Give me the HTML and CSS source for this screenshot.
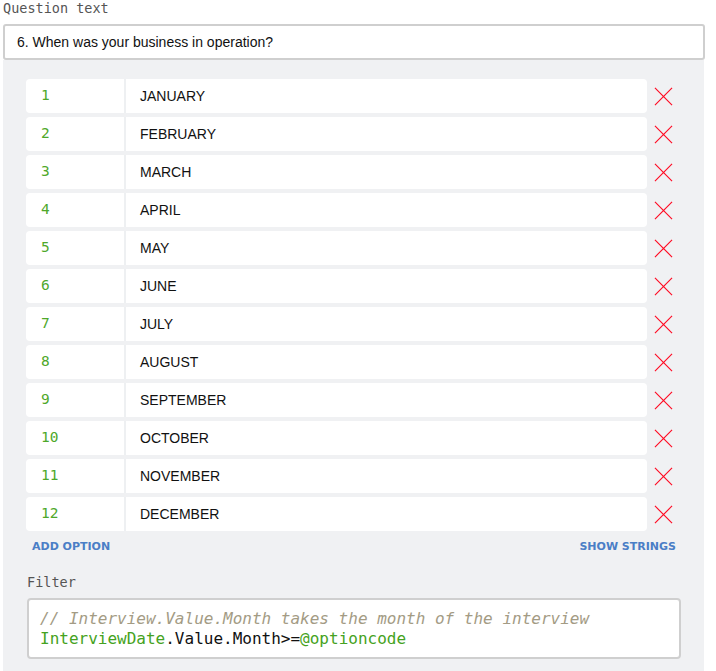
FILE: index.html
```html
<!DOCTYPE html>
<html>
<head>
<meta charset="utf-8">
<link rel="stylesheet" href="styles.css">
</head>
<body>
<div class="wrap">
  <div class="label">Question text</div>
  <div class="question">6. When was your business in operation?</div>
  <div class="panel">
    <div class="rows">
      <div class="row"><div class="opt"><div class="num">1</div><div class="txt">JANUARY</div></div><svg class="del" viewBox="0 0 20 20"><path d="M1 1L19 19M19 1L1 19"/></svg></div>
      <div class="row"><div class="opt"><div class="num">2</div><div class="txt">FEBRUARY</div></div><svg class="del" viewBox="0 0 20 20"><path d="M1 1L19 19M19 1L1 19"/></svg></div>
      <div class="row"><div class="opt"><div class="num">3</div><div class="txt">MARCH</div></div><svg class="del" viewBox="0 0 20 20"><path d="M1 1L19 19M19 1L1 19"/></svg></div>
      <div class="row"><div class="opt"><div class="num">4</div><div class="txt">APRIL</div></div><svg class="del" viewBox="0 0 20 20"><path d="M1 1L19 19M19 1L1 19"/></svg></div>
      <div class="row"><div class="opt"><div class="num">5</div><div class="txt">MAY</div></div><svg class="del" viewBox="0 0 20 20"><path d="M1 1L19 19M19 1L1 19"/></svg></div>
      <div class="row"><div class="opt"><div class="num">6</div><div class="txt">JUNE</div></div><svg class="del" viewBox="0 0 20 20"><path d="M1 1L19 19M19 1L1 19"/></svg></div>
      <div class="row"><div class="opt"><div class="num">7</div><div class="txt">JULY</div></div><svg class="del" viewBox="0 0 20 20"><path d="M1 1L19 19M19 1L1 19"/></svg></div>
      <div class="row"><div class="opt"><div class="num">8</div><div class="txt">AUGUST</div></div><svg class="del" viewBox="0 0 20 20"><path d="M1 1L19 19M19 1L1 19"/></svg></div>
      <div class="row"><div class="opt"><div class="num">9</div><div class="txt">SEPTEMBER</div></div><svg class="del" viewBox="0 0 20 20"><path d="M1 1L19 19M19 1L1 19"/></svg></div>
      <div class="row"><div class="opt"><div class="num">10</div><div class="txt">OCTOBER</div></div><svg class="del" viewBox="0 0 20 20"><path d="M1 1L19 19M19 1L1 19"/></svg></div>
      <div class="row"><div class="opt"><div class="num">11</div><div class="txt">NOVEMBER</div></div><svg class="del" viewBox="0 0 20 20"><path d="M1 1L19 19M19 1L1 19"/></svg></div>
      <div class="row"><div class="opt"><div class="num">12</div><div class="txt">DECEMBER</div></div><svg class="del" viewBox="0 0 20 20"><path d="M1 1L19 19M19 1L1 19"/></svg></div>
    </div>
    <div class="links">
      <span class="link">ADD OPTION</span>
      <span class="link">SHOW STRINGS</span>
    </div>
    <div class="label filter-label">Filter</div>
    <div class="code">
      <div class="line comment">// Interview.Value.Month takes the month of the interview</div>
      <div class="line"><span class="var">InterviewDate</span>.Value.Month&gt;=<span class="var">@optioncode</span></div>
    </div>
  </div>
</div>
</body>
</html>
```

FILE: styles.css
```css
html, body {
  margin: 0;
  padding: 0;
  background: #fff;
}
.wrap {
  width: 702px;
  margin-left: 3px;
  height: 671px;
  display: flex;
  flex-direction: column;
}
.label {
  font-family: "DejaVu Sans Mono", monospace;
  font-size: 13.5px;
  line-height: 16px;
  color: #555;
  height: 24px;
}
.question {
  box-sizing: border-box;
  height: 36px;
  border: 2px solid #cfcfcf;
  border-radius: 3px;
  padding: 0 12px;
  display: flex;
  align-items: center;
  font-family: "Liberation Sans", Arial, sans-serif;
  font-size: 14px;
  color: #111;
  background: #fff;
}
.panel {
  flex: 1;
  background: #f0f1f3;
  width: 701px;
  padding: 19px 0 0 23px;
  box-sizing: border-box;
}
.rows {
  display: flex;
  flex-direction: column;
  gap: 4px;
}
.row {
  display: flex;
  align-items: center;
}
.opt {
  width: 621px;
  height: 34px;
  background: #fff;
  border-radius: 4px;
  display: flex;
  align-items: stretch;
}
.num {
  width: 100px;
  box-sizing: border-box;
  padding-left: 15px;
  border-right: 2px solid #eef0f2;
  font-family: "DejaVu Sans Mono", monospace;
  font-size: 14.5px;
  color: #4ea82a;
  display: flex;
  align-items: center;
  padding-bottom: 3px;
}
.txt {
  padding-left: 14px;
  font-family: "Liberation Sans", Arial, sans-serif;
  font-size: 14px;
  color: #111;
  display: flex;
  align-items: center;
}
.del {
  width: 19px;
  height: 19px;
  margin-left: 7px;
}
.del path {
  stroke: #ff0a22;
  stroke-width: 1.2;
  fill: none;
}
.links {
  display: flex;
  justify-content: space-between;
  width: 650px;
  padding-left: 6px;
  box-sizing: border-box;
  margin-top: 6px;
  height: 18px;
  align-items: center;
}
.link {
  font-family: "DejaVu Sans", Verdana, sans-serif;
  font-weight: bold;
  font-size: 11px;
  letter-spacing: 0;
  color: #4a7ec6;
}
.filter-label {
  margin-top: 19px;
  margin-left: 1px;
  height: 24px;
}
.code {
  box-sizing: border-box;
  width: 654px;
  margin-left: 1px;
  height: 61px;
  border: 2px solid #cfcfcf;
  border-radius: 4px;
  background: #fff;
  padding: 9px 11px;
  font-family: "DejaVu Sans Mono", monospace;
  font-size: 16px;
  line-height: 20px;
  color: #111;
}
.line {
  white-space: pre;
}
.comment {
  font-style: italic;
  color: #a39b84;
}
.var {
  color: #45a221;
}
```
